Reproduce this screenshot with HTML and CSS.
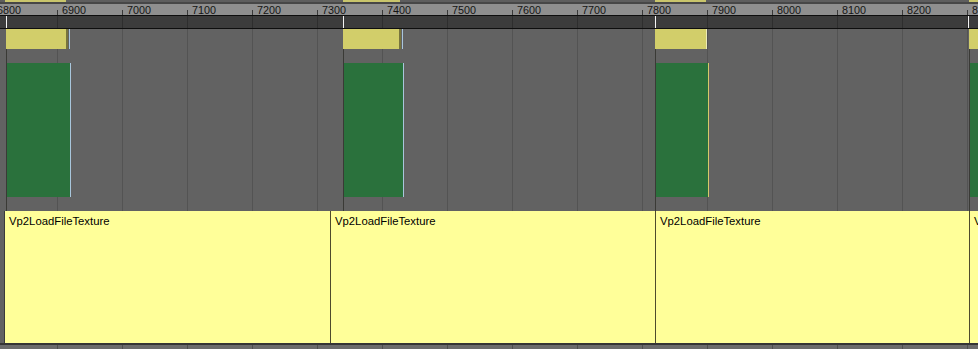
FILE: index.html
```html
<!DOCTYPE html>
<html>
<head>
<meta charset="utf-8">
<link rel="stylesheet" href="styles.css">
</head>
<body>
<div class="timeline">
  <div class="topstrip">
    <span class="mark" style="left:5px;width:61px"></span>
    <span class="mark" style="left:343px;width:57px"></span>
    <span class="mark" style="left:655px;width:51px"></span>
    <span class="mark" style="left:969px;width:9px"></span>
  </div>
  <div class="topline"></div>
  <div class="ruler">
    <span class="label" style="left:-3px">6800</span>
    <span class="label" style="left:62px">6900</span>
    <span class="label" style="left:127px">7000</span>
    <span class="label" style="left:192px">7100</span>
    <span class="label" style="left:257px">7200</span>
    <span class="label" style="left:322px">7300</span>
    <span class="label" style="left:387px">7400</span>
    <span class="label" style="left:452px">7500</span>
    <span class="label" style="left:517px">7600</span>
    <span class="label" style="left:582px">7700</span>
    <span class="label" style="left:647px">7800</span>
    <span class="label" style="left:712px">7900</span>
    <span class="label" style="left:777px">8000</span>
    <span class="label" style="left:842px">8100</span>
    <span class="label" style="left:907px">8200</span>
    <span class="label" style="left:972px">8300</span>
  </div>
  <div class="rule"></div>
  <div class="band">
    <span class="cursor" style="left:6px"></span>
    <span class="cursor" style="left:343px"></span>
    <span class="cursor" style="left:655px"></span>
    <span class="cursor" style="left:968px"></span>
  </div>
  <div class="rule"></div>
  <div class="track">
    <span class="start" style="left:6px"></span>
    <span class="start" style="left:343px"></span>
    <span class="start" style="left:655px"></span>
    <span class="start" style="left:969px"></span>

    <span class="khaki" style="left:6px;width:60px"></span>
    <span class="khaki-edge" style="left:66px"></span>
    <span class="edge blue top" style="left:69px"></span>
    <span class="khaki" style="left:343px;width:56px"></span>
    <span class="khaki-edge" style="left:399px"></span>
    <span class="edge blue top" style="left:402px"></span>
    <span class="khaki" style="left:655px;width:51px"></span>
    <span class="edge light top" style="left:706px"></span>
    <span class="khaki" style="left:969px;width:9px"></span>

    <span class="green" style="left:7px;width:63px"></span>
    <span class="edge blue low" style="left:70px"></span>
    <span class="green" style="left:344px;width:59px"></span>
    <span class="edge blue low" style="left:403px"></span>
    <span class="green" style="left:656px;width:52px"></span>
    <span class="edge gold low" style="left:708px"></span>
    <span class="green" style="left:970px;width:8px"></span>
  </div>
  <div class="events">
    <div class="event" style="width:326px">Vp2LoadFileTexture</div>
    <div class="event" style="width:325px">Vp2LoadFileTexture</div>
    <div class="event" style="width:314px">Vp2LoadFileTexture</div>
    <div class="event" style="width:20px">Vp2LoadFileTexture</div>
  </div>
  <div class="bottomline"></div>
  <div class="bottom"></div>
</div>
</body>
</html>
```
FILE: styles.css
```css
html, body {
  margin: 0;
  padding: 0;
  background: #626262;
}
.timeline {
  width: 978px;
  height: 349px;
  overflow: hidden;
  display: flex;
  flex-direction: column;
  font-family: "Liberation Sans", Arial, sans-serif;
}
.topstrip {
  position: relative;
  height: 2px;
  background: #5e5e5e;
}
.mark {
  position: absolute;
  top: 0;
  height: 2px;
  background: #c9c56c;
}
.topline {
  height: 2px;
  background: #474747;
}
.ruler {
  position: relative;
  height: 11px;
  background-color: #8f8f8f;
  background-image: linear-gradient(to right, #3a3a3a 0 1px, transparent 1px 65px);
  background-size: 65px 5px;
  background-position: 57px 6px;
  background-repeat: repeat-x;
}
.label {
  position: absolute;
  top: 0;
  font-size: 10.8px;
  line-height: 12px;
  color: #141414;
  white-space: nowrap;
}
.rule {
  height: 1px;
  background: #0e0e0e;
}
.band {
  position: relative;
  height: 12px;
  background-color: #3c3c3c;
  background-image: linear-gradient(to right, #2e2e2e 0 1px, transparent 1px 65px);
  background-size: 65px 100%;
  background-position: 57px 0;
  background-repeat: repeat-x;
}
.cursor {
  position: absolute;
  top: 0;
  bottom: 0;
  width: 1px;
  background: #f4f4f4;
}
.track {
  position: relative;
  height: 182px;
  background-color: #626262;
  background-image: linear-gradient(to right, #535353 0 1px, transparent 1px 65px);
  background-size: 65px 100%;
  background-position: 57px 0;
  background-repeat: repeat-x;
}
.start {
  position: absolute;
  top: 0;
  bottom: 0;
  width: 1px;
  background: #3a3a36;
}
.khaki {
  position: absolute;
  top: 0;
  height: 20px;
  background: #d2ce6a;
}
.khaki-edge {
  position: absolute;
  top: 0;
  height: 20px;
  width: 2px;
  background: #77743e;
}
.edge {
  position: absolute;
  width: 1px;
}
.edge.top {
  top: 0;
  height: 20px;
}
.edge.low {
  top: 34px;
  height: 134px;
}
.edge.blue { background: #a9c6dc; }
.edge.light { background: #ecebb8; }
.edge.gold { background: #d8c86a; }
.green {
  position: absolute;
  top: 34px;
  height: 134px;
  background: #2a713c;
}
.events {
  display: flex;
  height: 132px;
  padding-left: 4px;
  background: #626262;
}
.event {
  flex: none;
  box-sizing: border-box;
  height: 100%;
  background: #ffff99;
  border-left: 1px solid #4e4b2c;
  padding: 4px 0 0 4px;
  font-size: 11.3px;
  line-height: 13px;
  color: #000;
  white-space: nowrap;
  overflow: hidden;
}
.event:first-child {
  border-left-color: #3a3a3a;
}
.bottomline {
  height: 2px;
  background: #353535;
}
.bottom {
  height: 4px;
  background-color: #6b6b6b;
  background-image: linear-gradient(to right, #505050 0 1px, transparent 1px 65px);
  background-size: 65px 100%;
  background-position: 57px 0;
  background-repeat: repeat-x;
}
```
